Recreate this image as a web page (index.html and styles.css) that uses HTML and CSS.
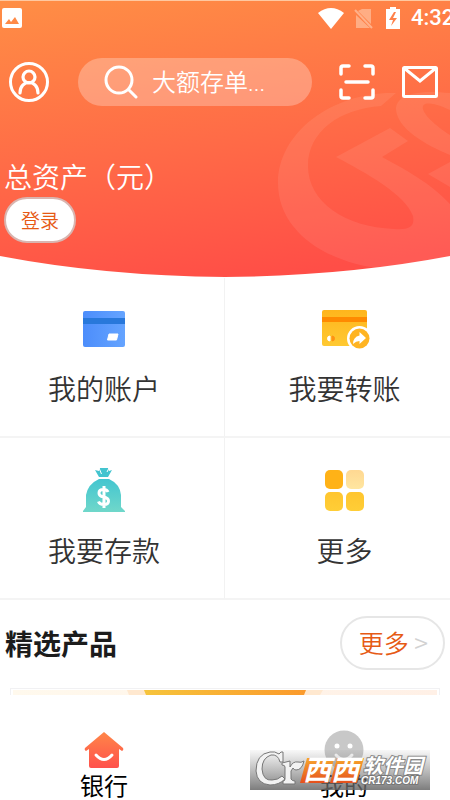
FILE: index.html
```html
<!DOCTYPE html>
<html lang="zh-CN">
<head>
<meta charset="utf-8">
<meta name="viewport" content="width=device-width, initial-scale=1">
<title>手机银行</title>
<link rel="stylesheet" href="styles.css">
</head>
<body>
<div class="app">
  <header class="hero">
    <svg class="emblem" width="172" height="180" viewBox="278 90 172 180" aria-hidden="true">
      <path d="M396 92C335 90 278 130 278 182C278 230 325 262 385 268L450 262V203C430 182 408 170 382 156L408 140L390 127L336 156C366 172 405 193 413 215C415 226 409 229 394 228C345 226 308 201 308 165C308 130 340 108 381 105Z"/>
      <path d="M450 92C414 88 396 95 396 108C397 128 426 144 450 154V134C431 122 417 107 425 103C433 101 443 106 450 109Z"/>
      <path d="M450 161L428 173L450 186Z"/>
    </svg>
    <svg class="curve" viewBox="0 0 450 22" preserveAspectRatio="none" aria-hidden="true"><path d="M0 0Q105 20 225 21Q345 20 450 0V22H0Z"/></svg>
    <div class="status">
      <svg class="status-photo" width="20" height="20" viewBox="0 0 20 20" aria-hidden="true"><rect width="20" height="20" rx="2" fill="#fff"/><path d="M3 16L7 11L9 14L13 9L17 16Z" fill="#ff8a47"/></svg>
      <svg width="26" height="21" viewBox="0 0 26 21" aria-hidden="true"><path d="M0 5Q13-5 26 5L13 21Z" fill="#fff"/></svg>
      <svg class="status-sim" width="20" height="21" viewBox="0 0 20 21" aria-hidden="true"><path d="M8 1H17V16L4 3ZM2 7L16 20H2Z" fill="#ffad84"/><path d="M1 2L18 20" stroke="#ffb18a" stroke-width="2"/></svg>
      <svg class="status-battery" width="14" height="22" viewBox="0 0 14 22" aria-hidden="true"><path d="M0 2H4V0H10V2H14V22H0Z" fill="#fff"/><path d="M8 5L3 13H7L5 19L11 11H7L10 5Z" fill="#ff8049"/></svg>
      <span class="clock">4:32</span>
    </div>
    <div class="toolbar">
      <button class="icon-button" aria-label="个人中心"><svg width="42" height="42" viewBox="0 0 42 42"><circle cx="21" cy="21" r="18.5" stroke-width="3"/><circle cx="21" cy="16" r="6" stroke-width="3.2"/><path d="M12 32C12 18 30 18 30 32" stroke-width="3.2" stroke-linecap="round"/></svg></button>
      <label class="search">
        <svg width="34" height="34" viewBox="0 0 34 34" aria-hidden="true"><circle cx="15" cy="15" r="13" stroke-width="3"/><path d="M25 25L32 32" stroke-width="3" stroke-linecap="round"/></svg>
        <input type="text" placeholder="大额存单..." aria-label="搜索">
      </label>
      <button class="icon-button" aria-label="扫一扫"><svg width="36" height="36" viewBox="0 0 36 36"><path d="M2 10V4Q2 2 4 2H10M26 2H32Q34 2 34 4V10M34 26V32Q34 34 32 34H26M10 34H4Q2 34 2 32V26M7 18H29" stroke-width="3.5" stroke-linecap="round"/></svg></button>
      <button class="icon-button" aria-label="消息"><svg width="36" height="36" viewBox="0 0 36 36"><rect x="1.5" y="3.5" width="33" height="29" rx="1" stroke-width="3"/><path d="M2 4L18 17L34 4" stroke-width="3"/></svg></button>
    </div>
    <div class="assets">
      <div class="assets-title">总资产（元）</div>
      <button class="login">登录</button>
    </div>
  </header>

  <main>
    <nav class="grid" aria-label="常用功能">
      <a class="cell" href="#account">
        <svg width="50" height="48" viewBox="0 0 50 48" aria-hidden="true">
          <defs><linearGradient id="blue"><stop stop-color="#4c8dfb"/><stop offset="1" stop-color="#65a4ff"/></linearGradient></defs>
          <rect x="4" y="7" width="42" height="36" rx="2" fill="url(#blue)"/><path d="M4 14H46V20H4Z" fill="#2878db"/><path d="M30 30H39L37.500 36H28.500Z" fill="#fff" stroke="#fff" stroke-linejoin="round"/>
        </svg>
        <span>我的账户</span>
      </a>
      <a class="cell" href="#transfer">
        <svg width="50" height="48" viewBox="0 0 50 48" aria-hidden="true">
          <defs><linearGradient id="gold" x2="0" y2="1"><stop stop-color="#ffb51c"/><stop offset="1" stop-color="#ffc932"/></linearGradient></defs>
          <rect x="2" y="6" width="45" height="36" rx="2" fill="url(#gold)"/><path d="M2 13H47V18H2Z" fill="#ff8a00"/><path d="M10 32A2.500 2.500 0 0 0 10 37Z" fill="#fff" stroke="#fff"/><path d="M12 32A2.500 2.500 0 0 1 12 37Z" fill="#ff9213" stroke="#ff9213"/>
          <circle cx="39.500" cy="34.500" r="12.500" fill="#fff"/><circle cx="39.500" cy="34.500" r="10" fill="#ffb422"/><path d="M39.500 28L46 34L39.500 40V37Q36 37 33 40Q33 33 39.500 31.500Z" fill="#fff"/>
        </svg>
        <span>我要转账</span>
      </a>
      <a class="cell" href="#deposit">
        <svg width="50" height="48" viewBox="0 0 50 48" aria-hidden="true">
          <defs><linearGradient id="teal" x2="0" y2="1"><stop stop-color="#43c6d0"/><stop offset="1" stop-color="#70d7ca"/></linearGradient></defs>
          <path d="M16 4L20 5L21 2H29L30 5L33 4L29 11H20Z" fill="#43c4cf"/><path d="M20 2L22.500 8M30 2L28 6" stroke="#fff"/>
          <path d="M20 13H30Q41 18 42 29V41L46 45V46H4V45L7 41V29Q9 18 20 13Z" fill="url(#teal)"/>
          <path d="M29 26Q28 23.500 24.500 23.500Q20 23.500 20 27Q20 30 24.500 31Q29.500 32 29.500 35Q29.500 38.500 25 38.500Q20.500 38.500 19.500 35.500M25 20V42" fill="none" stroke="#fff" stroke-width="3"/>
        </svg>
        <span>我要存款</span>
      </a>
      <a class="cell" href="#more">
        <svg width="50" height="48" viewBox="0 0 50 48" aria-hidden="true">
          <defs><linearGradient id="pale" x2="0" y2="1"><stop stop-color="#ffd892"/><stop offset="1" stop-color="#ffe6a0"/></linearGradient><linearGradient id="yellow" x2="0" y2="1"><stop stop-color="#ffc52e"/><stop offset="1" stop-color="#ffce37"/></linearGradient></defs>
          <rect x="5" y="4" width="18" height="19" rx="5" fill="#ffb217"/><rect x="26" y="4" width="18" height="19" rx="5" fill="url(#pale)"/><rect x="5" y="26" width="18" height="19" rx="5" fill="url(#yellow)"/><rect x="26" y="26" width="18" height="19" rx="5" fill="url(#yellow)"/>
        </svg>
        <span>更多</span>
      </a>
    </nav>

    <section class="products">
      <div class="products-head">
        <h2>精选产品</h2>
        <a class="more" href="#products">更多 <span>&gt;</span></a>
      </div>
      <div class="product-card">
        <svg viewBox="0 0 424 5" preserveAspectRatio="none" aria-hidden="true">
          <defs><linearGradient id="banner"><stop stop-color="#f6c43c"/><stop offset="1" stop-color="#fb9a2c"/></linearGradient><linearGradient id="wash"><stop stop-color="#fff9ed"/><stop offset="1" stop-color="#fff0e6"/></linearGradient></defs>
          <path d="M0 0H424V5H0Z" fill="url(#wash)"/><path d="M114 0H310L307 5H116Z" fill="#ffe8cf"/><path d="M131 0H293L291 5H133Z" fill="url(#banner)"/>
        </svg>
      </div>
    </section>
  </main>

  <footer class="tabs">
    <a class="tab" href="#bank">
      <svg width="40" height="40" viewBox="0 0 40 40" aria-hidden="true">
        <defs><linearGradient id="home" x2="0" y2="1"><stop stop-color="#ff8648"/><stop offset="1" stop-color="#ff514c"/></linearGradient></defs>
        <path d="M20 2L39 18Q40 20 38 21L35 19V36Q35 38 33 38H7Q5 38 5 36V19L2 21Q0 20 1 18Z" fill="url(#home)"/><path d="M12 25Q20 34 28 25" fill="none" stroke="#fff" stroke-width="3" stroke-linecap="round"/>
      </svg>
      <span>银行</span>
    </a>
    <a class="tab" href="#mine">
      <svg width="40" height="40" viewBox="0 0 40 40" aria-hidden="true"><circle cx="20" cy="20" r="19.500" fill="#c8c8c8"/><circle cx="13" cy="16" r="2.500" fill="#fff"/><circle cx="26" cy="16" r="2.500" fill="#fff"/><path d="M12 25Q20 34 28 25" fill="none" stroke="#fff" stroke-width="3" stroke-linecap="round"/></svg>
      <span>我的</span>
    </a>
    <svg class="watermark" width="180" height="40" viewBox="0 0 180 40">
      <defs><linearGradient id="shade" x2="0" y2="1"><stop stop-color="#777" stop-opacity=".05"/><stop offset="1" stop-color="#666" stop-opacity=".85"/></linearGradient><linearGradient id="orange" x2="0" y2="1"><stop stop-color="#f7a62c"/><stop offset="1" stop-color="#e5501c"/></linearGradient></defs>
      <rect width="180" height="40" fill="url(#shade)"/>
      <g fill="#f2f2f2" stroke="#777" stroke-linejoin="round">
        <path d="M33 2V12H30Q28 4 21 5Q12 8 12 19Q13 31 22 30Q28 30 32 26L35 29Q29 35 20 35Q7 34 6 21Q6 4 20 2Q25 1 29 4L31 2Z"/>
        <path d="M32 13L40 11V17Q43 11 48 12Q51 13 54 11Q52 20 46 20Q44 20 43 18L41 21V29Q42 31 45 31V34H33V31Q35 31 35 29V17Q35 15 32 15Z"/>
      </g>
      <path d="M57 8H84L78 33H50ZM87 8H114L107 33H80Z" fill="url(#orange)"/>
      <text class="mark-west" x="53" y="30">西西</text>
      <text class="mark-name" x="113" y="23">软件园</text>
      <text class="mark-site" x="111" y="34">CR173.COM</text>
    </svg>
  </footer>
</div>
</body>
</html>
```
FILE: styles.css
```css
* { box-sizing: border-box; }
body {
  margin: 0;
  background: #fff;
  color: #333;
  font-family: "Noto Sans CJK SC", sans-serif;
  font-weight: 350;
}
svg { display: block; flex: none; }
a { color: inherit; text-decoration: none; }
button { font: inherit; cursor: pointer; }

.app {
  min-height: 100vh;
  display: flex;
  flex-direction: column;
  overflow: hidden;
}

.hero {
  position: relative;
  padding-bottom: 35px;
  border-top: 1px solid #ffc8a0;
  background: linear-gradient(172deg, #ff8e45 0%, #ff6b47 50%, #ff4e47 92%);
  overflow: hidden;
}
.emblem { position: absolute; right: 0; top: 90px; fill: #fff; fill-opacity: .08; }
.curve { position: absolute; left: 0; bottom: 0; width: 100%; height: 22px; fill: #fff; }

.status {
  display: flex;
  align-items: center;
  height: 34px;
  padding-left: 2px;
  overflow: hidden;
}
.status-photo { margin-right: auto; }
.status-sim { margin-left: 10px; }
.status-battery { margin-left: 12px; }
.clock {
  width: 39px;
  margin-left: 11px;
  color: #fff;
  font: 500 22px/34px Roboto, sans-serif;
  white-space: nowrap;
}

.toolbar {
  position: relative;
  display: flex;
  align-items: center;
  padding: 0 12px 0 8px;
  margin-top: 23px;
}
.toolbar svg { fill: none; stroke: #fff; }
.icon-button { padding: 0; border: 0; background: none; }
.search {
  flex: 1;
  display: flex;
  align-items: center;
  gap: 14px;
  min-width: 0;
  height: 48px;
  margin: 0 27px 0 28px;
  padding: 0 24px 0 26px;
  border-radius: 24px;
  background: rgba(255, 255, 255, .27);
}
.search input {
  flex: 1;
  min-width: 0;
  padding: 2px 0 0;
  border: 0;
  outline: 0;
  background: none;
  color: #fff;
  font: 350 24px/36px Roboto, "Noto Sans CJK SC", sans-serif;
}
.search input::placeholder { color: #fff; opacity: 1; }
.icon-button + .icon-button { margin-left: 27px; }

.assets { position: relative; padding: 49px 4px 0; color: #fff; }
.assets-title { font-size: 28px; line-height: 42px; }
.login {
  display: block;
  height: 46px;
  padding: 0 15px 2px;
  border: 2px solid #d9b5b0;
  border-radius: 23px;
  background: #fff;
  color: #e65a14;
  font-size: 19px;
}

.grid {
  display: grid;
  grid-template-columns: 1fr 1fr;
  margin: 0 -14px 0 -16px;
}
.cell {
  display: flex;
  flex-direction: column;
  align-items: center;
  gap: 16px;
  height: 162px;
  padding-top: 28px;
  border-bottom: 2px solid #f4f4f4;
  font-size: 28px;
  line-height: 40px;
}
.cell:nth-child(-n+2) { height: 160px; padding-top: 26px; }
.cell:nth-child(even) { border-left: 1px solid #f2f2f2; }

.products-head {
  display: flex;
  align-items: center;
  justify-content: space-between;
  padding: 16px 5px 18px;
}
h2 { margin: 0; color: #1c1c1c; font-size: 28px; line-height: 42px; }
.more {
  height: 54px;
  padding: 0 15px 0 17px;
  border: 2px solid #e6e6e6;
  border-radius: 27px;
  color: #e65a14;
  font-size: 25px;
  line-height: 48px;
}
.more span { color: #d2d2d2; }
.product-card {
  margin: 0 10px;
  padding: 1px 2px 0;
  border: 1px solid #f1f1f3;
  border-bottom: 0;
}
.product-card svg { width: 100%; height: 5px; }

.tabs {
  position: relative;
  display: grid;
  grid-template-columns: 1fr 1fr;
  margin: auto -14px 0 -16px;
  padding-top: 34px;
  background: #fff;
}
.tab {
  display: flex;
  flex-direction: column;
  align-items: center;
  color: #000;
  font-size: 24px;
  font-weight: 400;
  line-height: 30px;
}
.watermark { position: absolute; right: 34px; bottom: 10px; }
.watermark text {
  font-family: "Noto Sans CJK SC", sans-serif;
  font-style: italic;
  font-weight: 700;
  fill: #fff;
}
.watermark .mark-west { font-size: 28px; }
.watermark .mark-name { font-size: 20px; stroke: #888; stroke-width: 2px; paint-order: stroke; }
.watermark .mark-site { font: italic 700 10px "Liberation Sans", sans-serif; stroke: #777; stroke-width: 2px; paint-order: stroke; }
```
